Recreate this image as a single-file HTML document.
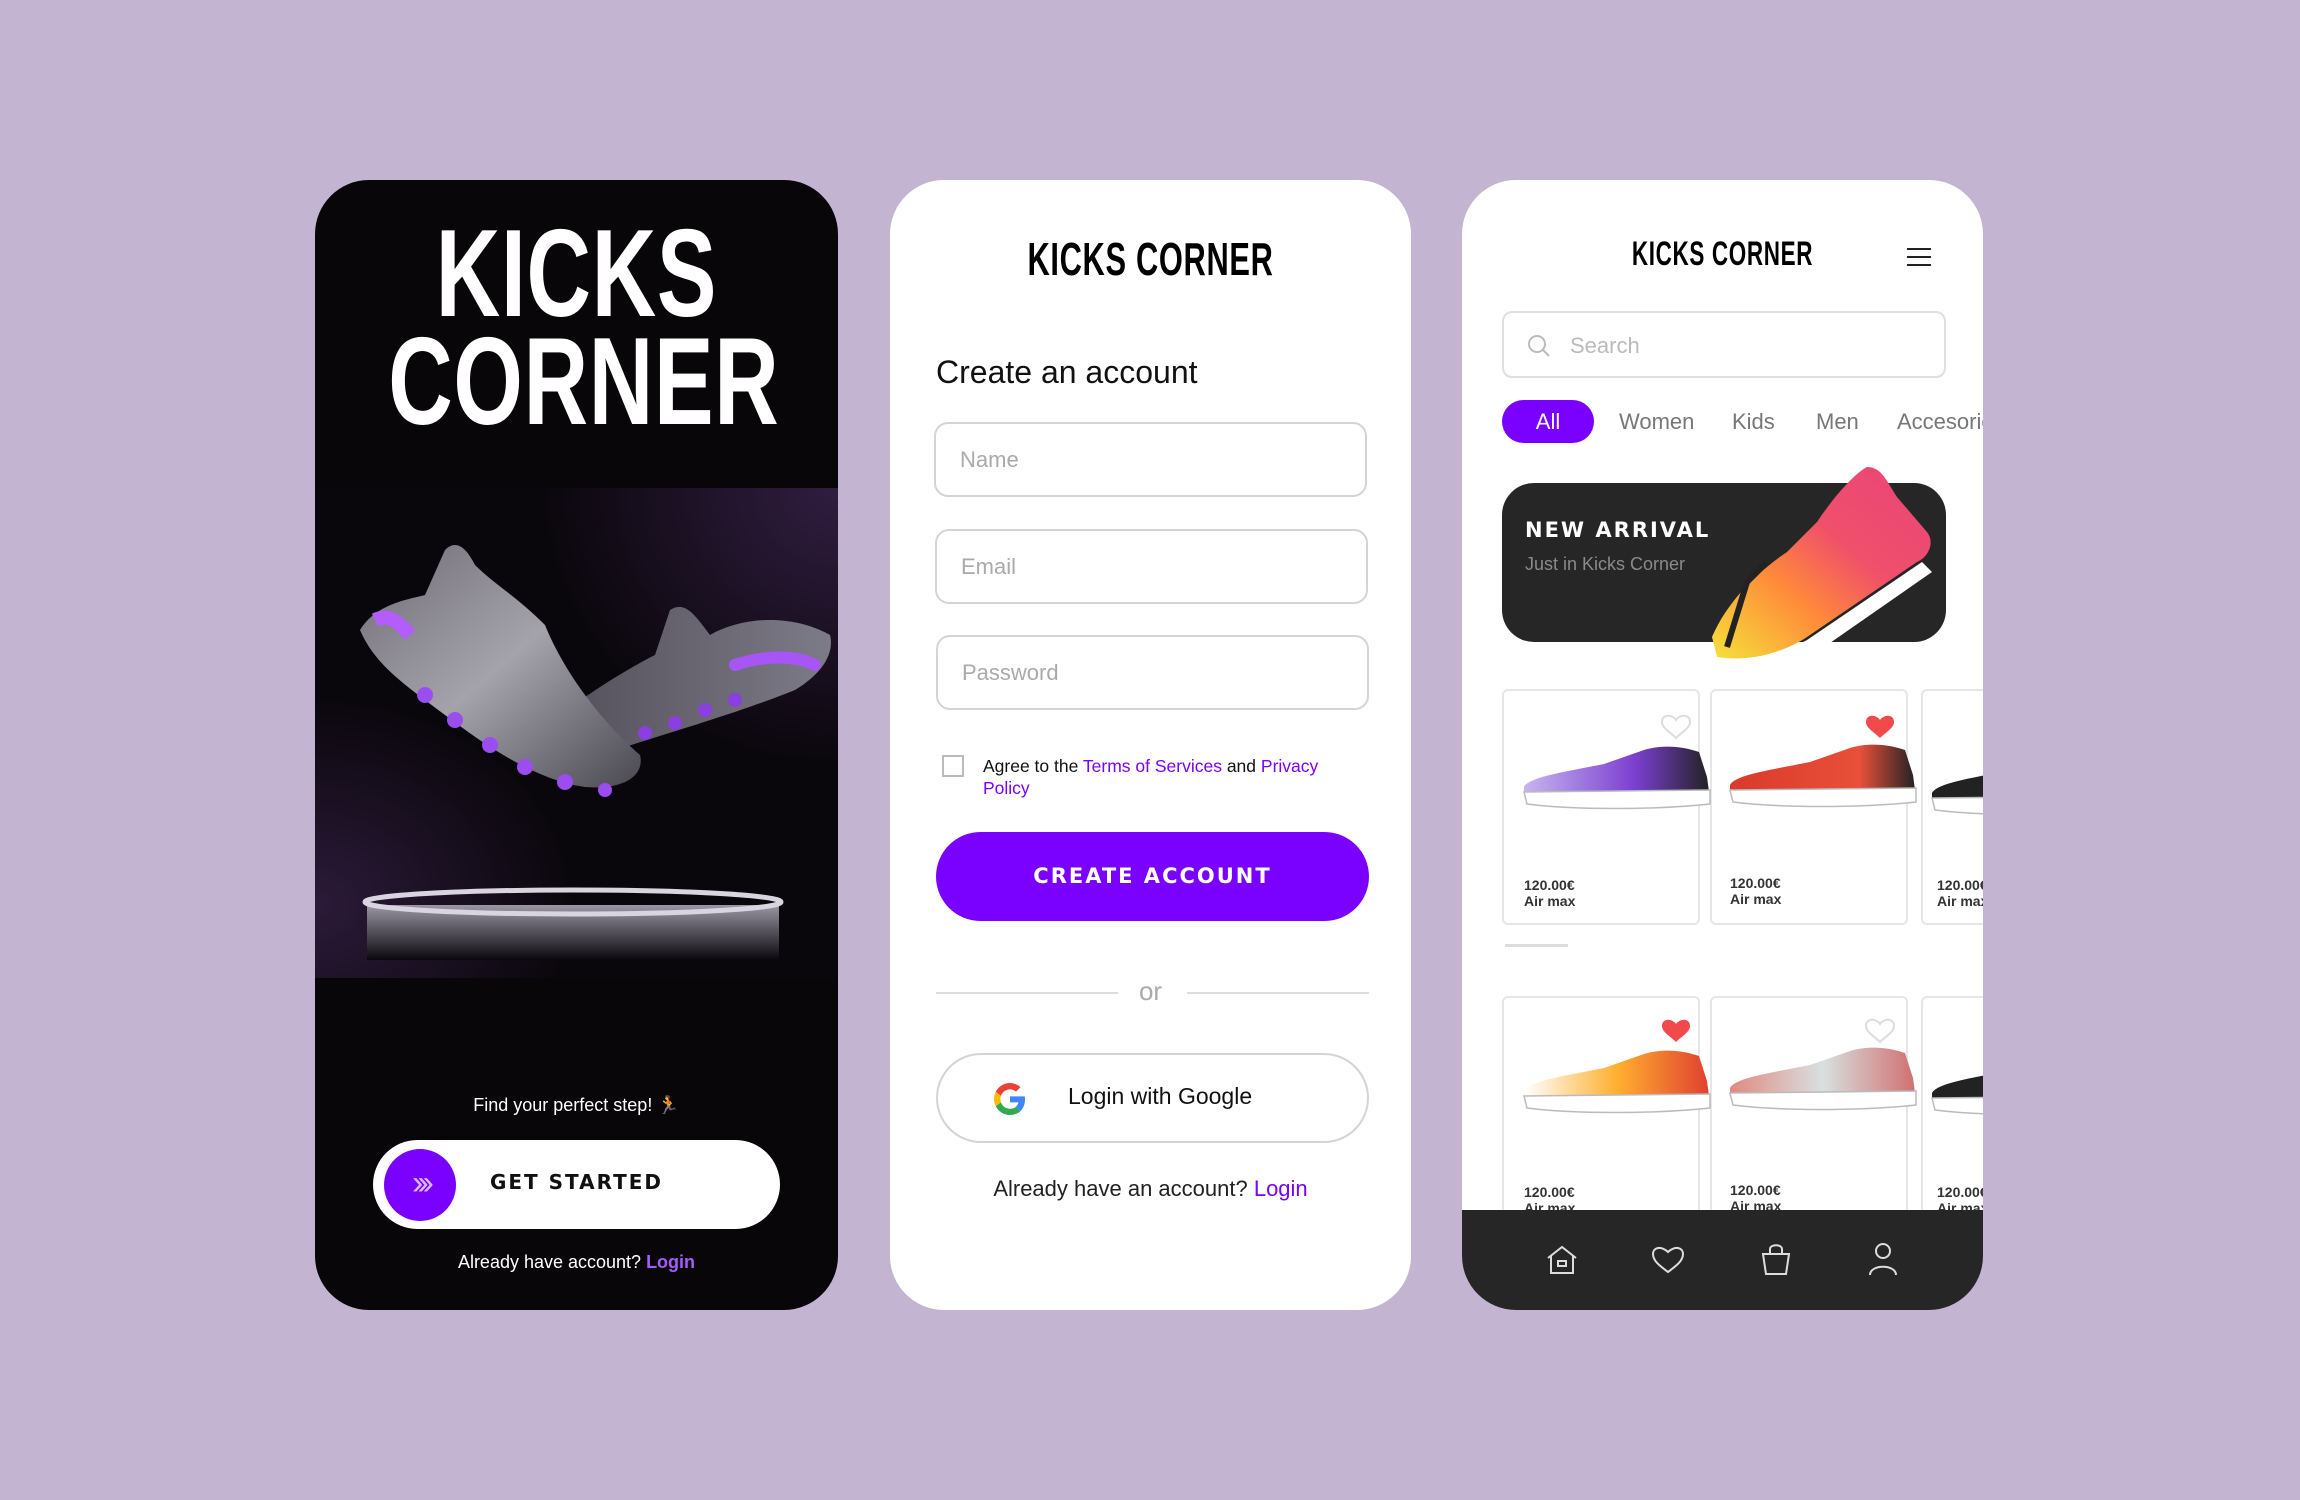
<!DOCTYPE html>
<html><head><meta charset="utf-8">
<style>
*{margin:0;padding:0;box-sizing:border-box}
body{width:2300px;height:1500px;background:#c3b5d2;position:relative;overflow:hidden;font-family:"Liberation Sans",sans-serif}
.a{position:absolute}
.panel{position:absolute;top:180px;height:1130px;border-radius:54px;overflow:hidden}
.logo{font-family:"Liberation Sans",sans-serif;font-weight:bold;white-space:nowrap;transform-origin:center;letter-spacing:1px}
.wide{font-family:"DejaVu Sans","Liberation Sans",sans-serif;font-weight:bold;letter-spacing:2px}
.inp{position:absolute;left:44px;width:433px;height:75px;border:2px solid #d4d4d4;border-radius:14px;color:#aaa;font-size:22px;padding-left:24px;line-height:71px}
.card{position:absolute;width:198px;height:236px;border:2px solid #e6e6e6;border-radius:6px;background:#fff;overflow:hidden}
.price{position:absolute;left:20px;font-size:14px;font-weight:bold;color:#333;line-height:16px;white-space:nowrap}
</style></head><body>

<!-- PANEL 1 -->
<div class="panel" style="left:315px;width:523px;background:#080609">
  <div class="a" style="left:0;top:308px;width:523px;height:490px;background:radial-gradient(ellipse at 100% 0%,rgba(120,70,160,.35),transparent 40%),radial-gradient(ellipse at 0% 85%,rgba(120,70,160,.3),transparent 35%),#0a070c"></div>
  <div class="a logo" style="left:0;width:523px;top:40px;text-align:center;color:#fff;font-size:124px;line-height:108px;transform:scaleX(.72)">KICKS<br>CORNER</div>
  <svg class="a" style="left:0;top:300px" width="523" height="500" viewBox="0 0 523 500">
    <defs>
      <linearGradient id="sg" x1="0" y1="0" x2="1" y2="1"><stop offset="0" stop-color="#6e6b75"/><stop offset=".5" stop-color="#a5a3aa"/><stop offset="1" stop-color="#4a4850"/></linearGradient>
      <linearGradient id="sg2" x1="0" y1="0" x2="1" y2="0"><stop offset="0" stop-color="#4b4853"/><stop offset="1" stop-color="#7e7b88"/></linearGradient>
      <linearGradient id="ped" x1="0" y1="0" x2="0" y2="1"><stop offset="0" stop-color="#9a96a4"/><stop offset="1" stop-color="#0a070c"/></linearGradient>
    </defs>
    <g transform="translate(0,25)">
    <path d="M195,250 C240,210 300,170 340,150 L355,105 C370,95 380,110 395,130 C430,110 480,110 515,130 C520,150 505,170 480,185 C430,205 380,220 300,245 C260,258 220,262 195,250Z" fill="url(#sg2)"/>
    <path d="M420,160 C450,150 480,150 500,160" stroke="#a855f7" stroke-width="12" fill="none" stroke-linecap="round"/>
    <g fill="#8b3fe0"><circle cx="300" cy="238" r="7"/><circle cx="330" cy="228" r="7"/><circle cx="360" cy="218" r="7"/><circle cx="390" cy="205" r="7"/><circle cx="420" cy="195" r="7"/></g>
    <path d="M45,125 C60,100 90,95 110,90 L130,45 C140,35 150,40 160,60 C180,80 200,90 230,120 C250,170 290,220 325,250 C330,270 310,285 270,282 C220,275 170,240 130,210 C90,180 60,160 45,125Z" fill="url(#sg)"/>
    <path d="M60,115 C70,110 80,112 95,130" stroke="#b35cff" stroke-width="14" fill="none"/>
    <g fill="#9b4df0"><circle cx="110" cy="190" r="8"/><circle cx="140" cy="215" r="8"/><circle cx="175" cy="240" r="8"/><circle cx="210" cy="262" r="8"/><circle cx="250" cy="277" r="8"/><circle cx="290" cy="285" r="7"/></g>
    </g>
    <rect x="52" y="425" width="412" height="55" fill="url(#ped)"/>
    <ellipse cx="258" cy="422" rx="208" ry="12" fill="none" stroke="#d8d4e0" stroke-width="5"/>
  </svg>
  <div class="a" style="left:0;width:523px;top:915px;text-align:center;color:#fff;font-size:18px">Find your perfect step! <span style="color:#888">🏃</span></div>
  <div class="a" style="left:58px;top:960px;width:407px;height:89px;border-radius:45px;background:#fff">
    <div class="a" style="left:11px;top:9px;width:72px;height:72px;border-radius:50%;background:#7a00ff;color:#d9b8ff;font-size:34px;text-align:center;line-height:68px;letter-spacing:-6px">›››</div>
    <div class="a wide" style="left:0;right:0;top:30px;text-align:center;font-size:20px;color:#111">GET STARTED</div>
  </div>
  <div class="a" style="left:0;width:523px;top:1072px;text-align:center;color:#fff;font-size:18px">Already have account? <span style="color:#a45cff;font-weight:bold">Login</span></div>
</div>

<!-- PANEL 2 -->
<div class="panel" style="left:890px;width:521px;background:#fff">
  <div class="a logo" style="left:0;width:521px;top:52px;text-align:center;color:#000;font-size:46px;transform:scaleX(.67)">KICKS CORNER</div>
  <div class="a" style="left:46px;top:174px;font-size:32px;color:#111">Create an account</div>
  <div class="inp" style="top:242px">Name</div>
  <div class="inp" style="top:349px;left:45px">Email</div>
  <div class="inp" style="top:455px;left:46px">Password</div>
  <div class="a" style="left:52px;top:575px;width:22px;height:22px;border:2px solid #bbb"></div>
  <div class="a" style="left:93px;top:575px;width:380px;font-size:17.5px;line-height:22px;color:#111">Agree to the <span style="color:#7a00ff">Terms of Services</span> and <span style="color:#7a00ff">Privacy Policy</span></div>
  <div class="a wide" style="left:46px;top:652px;width:433px;height:89px;border-radius:45px;background:#7a00ff;color:#fff;text-align:center;line-height:89px;font-size:21px">CREATE ACCOUNT</div>
  <div class="a" style="left:46px;top:812px;width:182px;height:2px;background:#ddd"></div>
  <div class="a" style="left:297px;top:812px;width:182px;height:2px;background:#ddd"></div>
  <div class="a" style="left:0;width:521px;top:796px;text-align:center;font-size:26px;color:#aaa">or</div>
  <div class="a" style="left:46px;top:873px;width:433px;height:90px;border-radius:45px;border:2px solid #d4d4d4">
    <svg class="a" style="left:56px;top:28px" width="32" height="32" viewBox="0 0 48 48"><path fill="#EA4335" d="M24 9.5c3.5 0 6.6 1.2 9 3.5l6.7-6.7C35.6 2.4 30.2 0 24 0 14.6 0 6.6 5.4 2.6 13.3l7.8 6C12.3 13.6 17.7 9.5 24 9.5z"/><path fill="#4285F4" d="M46.5 24.5c0-1.6-.1-3.1-.4-4.5H24v9h12.7c-.6 2.9-2.2 5.4-4.7 7.1l7.6 5.9c4.4-4.1 6.9-10.1 6.9-17.5z"/><path fill="#FBBC05" d="M10.4 28.7c-.5-1.4-.8-3-.8-4.7s.3-3.3.8-4.7l-7.800-6C.9 16.6 0 20.2 0 24s.9 7.4 2.6 10.7l7.8-6z"/><path fill="#34A853" d="M24 48c6.5 0 11.9-2.1 15.9-5.8l-7.6-5.9c-2.1 1.4-4.9 2.3-8.3 2.3-6.3 0-11.7-4.1-13.6-9.8l-7.8 6C6.6 42.6 14.6 48 24 48z"/></svg>
    <div class="a" style="left:130px;top:28px;font-size:23px;color:#111">Login with Google</div>
  </div>
  <div class="a" style="left:0;width:521px;top:996px;text-align:center;font-size:22px;color:#222">Already have an account? <span style="color:#7a00ff">Login</span></div>
</div>

<!-- PANEL 3 -->
<div class="panel" style="left:1462px;width:521px;background:#fff">
  <div class="a logo" style="left:0;width:521px;top:55px;text-align:center;color:#000;font-size:34px;transform:scaleX(.66)">KICKS CORNER</div>
  <div class="a" style="left:445px;top:68px;width:24px;height:2px;background:#222;box-shadow:0 8px 0 #222,0 16px 0 #222"></div>
  <div class="a" style="left:40px;top:131px;width:444px;height:67px;border:2px solid #e0e0e0;border-radius:10px">
    <svg class="a" style="left:22px;top:20px" width="26" height="26" viewBox="0 0 26 26"><circle cx="11" cy="11" r="8" fill="none" stroke="#bbb" stroke-width="2"/><path d="M17 17l6 6" stroke="#bbb" stroke-width="2"/></svg>
    <div class="a" style="left:66px;top:20px;font-size:22px;color:#bbb">Search</div>
  </div>
  <div class="a" style="left:40px;top:220px;width:92px;height:43px;border-radius:22px;background:#7a00ff;color:#fff;text-align:center;line-height:43px;font-size:22px">All</div>
  <div class="a" style="left:157px;top:229px;font-size:22px;color:#777;white-space:nowrap">Women</div>
  <div class="a" style="left:270px;top:229px;font-size:22px;color:#777">Kids</div>
  <div class="a" style="left:354px;top:229px;font-size:22px;color:#777">Men</div>
  <div class="a" style="left:435px;top:229px;font-size:22px;color:#777;white-space:nowrap">Accesories</div>
  <div class="a" style="left:40px;top:303px;width:444px;height:159px;border-radius:32px;background:#262626">
    <div class="a wide" style="left:23px;top:35px;color:#fff;font-size:21px">NEW ARRIVAL</div>
    <div class="a" style="left:23px;top:71px;color:#8a8a8a;font-size:18px">Just in Kicks Corner</div>
  </div>
  <svg class="a" style="left:245px;top:282px" width="230" height="205" viewBox="0 0 230 205">
    <defs><linearGradient id="na" x1="0" y1="1" x2="1" y2="0"><stop offset="0" stop-color="#f5e23a"/><stop offset=".35" stop-color="#ff8a3a"/><stop offset=".6" stop-color="#f0506a"/><stop offset="1" stop-color="#e8447a"/></linearGradient></defs>
    <path d="M5,175 C20,140 50,110 80,90 L110,60 C130,30 150,10 160,5 C175,5 180,20 190,35 L220,70 C228,80 222,95 210,100 L100,175 C70,195 30,200 10,195Z" fill="url(#na)"/>
    <path d="M10,195 C40,200 75,192 100,178 L215,100 L225,110 L110,190 C80,205 40,205 10,200Z" fill="#fff"/>
    <path d="M20,185 L40,120 L60,100" stroke="#222" stroke-width="6" fill="none"/>
  </svg>
  <div class="card" style="left:40px;top:509px"></div>
  <div class="card" style="left:248px;top:509px"></div>
  <div class="card" style="left:459px;top:509px"></div>
  <div class="card" style="left:40px;top:816px"></div>
  <div class="card" style="left:248px;top:816px"></div>
  <div class="card" style="left:459px;top:816px"></div>
  <svg class="a" style="left:0;top:500px" width="521" height="530" viewBox="0 0 521 530">
    <defs>
      <linearGradient id="c1" x1="0" x2="1"><stop offset="0" stop-color="#c6b5f0"/><stop offset=".6" stop-color="#7b3fd0"/><stop offset="1" stop-color="#222"/></linearGradient>
      <linearGradient id="c2" x1="0" x2="1"><stop offset="0" stop-color="#d93a2a"/><stop offset=".7" stop-color="#e8503a"/><stop offset="1" stop-color="#222"/></linearGradient>
      <linearGradient id="c4" x1="0" x2="1"><stop offset="0" stop-color="#fff"/><stop offset=".5" stop-color="#ffb030"/><stop offset="1" stop-color="#e04030"/></linearGradient>
      <linearGradient id="c5" x1="0" x2="1"><stop offset="0" stop-color="#e08a80"/><stop offset=".5" stop-color="#d8e0e0"/><stop offset="1" stop-color="#d07070"/></linearGradient>
      <g id="shoe"><path d="M0,45 C5,35 40,30 80,22 L120,8 C140,2 160,5 175,10 L183,35 L185,50 L0,52Z"/><path d="M0,50 L186,48 L186,62 C130,68 50,68 3,62Z" fill="#fff" stroke="#bbb" stroke-width="1.5"/></g>
    </defs>
    <use href="#shoe" x="62" y="62" fill="url(#c1)"/>
    <use href="#shoe" x="268" y="60" fill="url(#c2)"/>
    <use href="#shoe" x="470" y="68" fill="#222"/>
    <use href="#shoe" x="62" y="366" fill="url(#c4)"/>
    <use href="#shoe" x="268" y="363" fill="url(#c5)"/>
    <use href="#shoe" x="470" y="368" fill="#222"/>
    <g fill="none" stroke="#ddd" stroke-width="2"><path d="M214,40 c-4,-6 -14,-6 -14,2 c0,6 8,10 14,16 c6,-6 14,-10 14,-16 c0,-8 -10,-8 -14,-2z"/><path d="M418,344 c-4,-6 -14,-6 -14,2 c0,6 8,10 14,16 c6,-6 14,-10 14,-16 c0,-8 -10,-8 -14,-2z"/></g>
    <g fill="#f04a4a"><path d="M418,40 c-4,-6 -14,-6 -14,2 c0,6 8,10 14,16 c6,-6 14,-10 14,-16 c0,-8 -10,-8 -14,-2z"/><path d="M214,344 c-4,-6 -14,-6 -14,2 c0,6 8,10 14,16 c6,-6 14,-10 14,-16 c0,-8 -10,-8 -14,-2z"/></g>
  </svg>
  <div class="price" style="top:697px;left:62px">120.00€<br>Air max</div>
  <div class="price" style="top:695px;left:268px">120.00€<br>Air max</div>
  <div class="price" style="top:697px;left:475px">120.00€<br>Air max</div>
  <div class="price" style="top:1004px;left:62px">120.00€<br>Air max</div>
  <div class="price" style="top:1002px;left:268px">120.00€<br>Air max</div>
  <div class="price" style="top:1004px;left:475px">120.00€<br>Air max</div>
  <div class="a" style="left:43px;top:764px;width:63px;height:3px;background:#ddd"></div>
  <div class="a" style="left:0;top:1030px;width:521px;height:100px;background:#262626">
    <svg class="a" style="left:82px;top:32px" width="36" height="36" viewBox="0 0 36 36" fill="none" stroke="#ddd" stroke-width="2"><path d="M4,16 L18,5 L32,16 M7,14 V31 H29 V14"/><rect x="14" y="19" width="8" height="5"/></svg>
    <svg class="a" style="left:188px;top:32px" width="36" height="36" viewBox="0 0 36 36" fill="none" stroke="#ddd" stroke-width="2"><path d="M18,30 C10,24 3,19 3,12 C3,6 10,3 18,10 C26,3 33,6 33,12 C33,19 26,24 18,30Z"/></svg>
    <svg class="a" style="left:296px;top:30px" width="36" height="38" viewBox="0 0 36 38" fill="none" stroke="#ddd" stroke-width="2"><path d="M5,14 H31 L28,34 H8Z M12,14 V9 C12,4 24,4 24,9 V14"/></svg>
    <svg class="a" style="left:403px;top:30px" width="36" height="38" viewBox="0 0 36 38" fill="none" stroke="#ddd" stroke-width="2"><circle cx="18" cy="11" r="7"/><path d="M5,35 C5,24 31,24 31,35"/></svg>
  </div>
</div>
</body></html>
